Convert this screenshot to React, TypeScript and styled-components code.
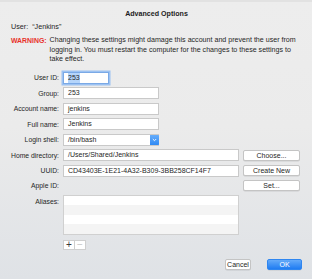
import styled, { createGlobalStyle } from "styled-components";

const GlobalStyle = createGlobalStyle`
	html, body {
		margin: 0;
		padding: 0;
	}
	body {
		font-family: "Liberation Sans", Arial, sans-serif;
		-webkit-font-smoothing: antialiased;
	}
`;

const Sheet = styled.div`
	box-sizing: border-box;
	width: 312px;
	height: 279px;
	overflow: hidden;
	display: flex;
	flex-direction: column;
	padding: 8px 10px 0 11px;
	background: linear-gradient(#ededed 0%, #ebebeb 45%, #dfe2e6 100%);
	border-top: 2px solid #e2e2e2;
	color: #262626;
	font-size: 7.2px;
`;

const Title = styled.h1`
	margin: 0;
	font-size: 7.1px;
	font-weight: 700;
	text-align: center;
	line-height: 9px;
	color: #1c1c1c;
`;

const UserLine = styled.div`
	margin-top: 3px;
	line-height: 9px;
	word-spacing: 2px;
`;

const Warning = styled.div`
	display: flex;
	gap: 3px;
	margin-top: 5px;
	line-height: 9.5px;
`;

const WarningTag = styled.span`
	color: #e8312a;
	font-weight: 700;
	font-size: 6.9px;
	flex: none;
`;

const WarningText = styled.p`
	margin: 0;
	font-size: 7.1px;
	white-space: nowrap;
`;

const Form = styled.div`
	display: grid;
	grid-template-columns: 48px 176px 57px;
	column-gap: 4px;
	row-gap: 3.5px;
	margin-top: 7px;
	align-items: center;
`;

const Label = styled.label<{ $top?: boolean }>`
	font-size: 6.8px;
	text-align: right;
	white-space: nowrap;
	justify-self: end;
	align-self: ${({ $top }) => ($top ? "start" : "center")};
	padding-top: ${({ $top }) => ($top ? "2px" : "0")};
	line-height: 9px;
`;

const Field = styled.div<{ $w?: number; $focus?: boolean }>`
	box-sizing: border-box;
	width: ${({ $w }) => ($w ? `${$w}px` : "100%")};
	height: 12px;
	background: #fff;
	border: 1px solid ${({ $focus }) => ($focus ? "#7aa9e6" : "#c9c9c9")};
	box-shadow: ${({ $focus }) => ($focus ? "0 0 0 1.5px #9cc2f2" : "none")};
	padding: 0 4px;
	display: flex;
	align-items: center;
	font-size: 7px;
	line-height: 10px;
	grid-column: 2;
	white-space: nowrap;
	overflow: hidden;
`;

const Selected = styled.span`
	background: #b5d5fb;
`;

const Popup = styled(Field)`
	padding-right: 0;
	justify-content: space-between;
	border-right: none;
`;

const PopupArrow = styled.span`
	width: 9px;
	height: 12px;
	margin-top: -1px;
	margin-bottom: -1px;
	border-radius: 0 2px 2px 0;
	background: linear-gradient(#6bb0fb, #2a86f4);
	display: flex;
	align-items: center;
	justify-content: center;
`;

const Button = styled.button<{ $primary?: boolean }>`
	box-sizing: border-box;
	height: 11px;
	padding: 0;
	font-family: inherit;
	font-size: 7px;
	line-height: 9px;
	border-radius: 2px;
	border: 1px solid ${({ $primary }) => ($primary ? "#2f86f0" : "#c4c4c4")};
	background: ${({ $primary }) =>
		$primary ? "linear-gradient(#64aaf9, #1f7cf2)" : "#fff"};
	color: ${({ $primary }) => ($primary ? "#fff" : "#262626")};
	box-shadow: 0 0.5px 0.5px rgba(0, 0, 0, 0.12);
`;

const SideButton = styled(Button)`
	width: 57px;
	grid-column: 3;
`;

const AliasList = styled.div`
	grid-column: 2;
	box-sizing: border-box;
	height: 40px;
	border: 1px solid #d0d0d0;
	display: flex;
	flex-direction: column;
`;

const AliasRow = styled.div<{ $odd?: boolean }>`
	flex: 1;
	background: ${({ $odd }) => ($odd ? "#f4f4f4" : "#fff")};
`;

const ListControls = styled.div`
	display: flex;
	margin: 5px 0 0 52px;
`;

const ControlButton = styled.div<{ $disabled?: boolean }>`
	box-sizing: border-box;
	width: 12px;
	height: 10px;
	background: #fff;
	border: 1px solid #cfcfcf;
	margin-right: -1px;
	display: flex;
	align-items: center;
	justify-content: center;
	color: ${({ $disabled }) => ($disabled ? "#c4c4c4" : "#3a3a3a")};
	font-size: 10px;
	line-height: 10px;
`;

const Footer = styled.div`
	display: flex;
	justify-content: flex-end;
	gap: 16px;
	margin-top: 9px;
`;

const FooterButton = styled(Button)<{ $w: number }>`
	width: ${({ $w }) => $w}px;
	height: 11px;
`;

const Empty = styled.div`
	grid-column: 2;
`;

const aliasRows = [false, true, false, true];

export default function App() {
	return (
		<>
			<GlobalStyle />
			<Sheet>
				<Title>Advanced Options</Title>
				<UserLine>User: &ldquo;Jenkins&rdquo;</UserLine>
				<Warning>
					<WarningTag>WARNING:</WarningTag>
					<WarningText>
						Changing these settings might damage this account and prevent the user from
						<br />
						logging in. You must restart the computer for the changes to these settings to
						<br />
						take effect.
					</WarningText>
				</Warning>

				<Form>
					<Label>User ID:</Label>
					<Field $w={46} $focus>
						<Selected>253</Selected>
					</Field>
					<span />

					<Label>Group:</Label>
					<Field $w={96}>253</Field>
					<span />

					<Label>Account name:</Label>
					<Field $w={96}>jenkins</Field>
					<span />

					<Label>Full name:</Label>
					<Field $w={96}>Jenkins</Field>
					<span />

					<Label>Login shell:</Label>
					<Popup $w={96}>
						/bin/bash
						<PopupArrow>
							<svg width="5" height="4" viewBox="0 0 5 4">
								<path d="M0.8 1 L2.5 2.7 L4.2 1" fill="none" stroke="#fff" strokeWidth="0.9" />
							</svg>
						</PopupArrow>
					</Popup>
					<span />

					<Label>Home directory:</Label>
					<Field>/Users/Shared/Jenkins</Field>
					<SideButton>Choose...</SideButton>

					<Label>UUID:</Label>
					<Field>CD43403E-1E21-4A32-B309-3BB258CF14F7</Field>
					<SideButton>Create New</SideButton>

					<Label>Apple ID:</Label>
					<Empty />
					<SideButton>Set...</SideButton>

					<Label $top>Aliases:</Label>
					<AliasList>
						{aliasRows.map((odd, i) => (
							<AliasRow key={i} $odd={odd} />
						))}
					</AliasList>
					<span />
				</Form>

				<ListControls>
					<ControlButton>+</ControlButton>
					<ControlButton $disabled>&minus;</ControlButton>
				</ListControls>

				<Footer>
					<FooterButton $w={26}>Cancel</FooterButton>
					<FooterButton $w={35} $primary>
						OK
					</FooterButton>
				</Footer>
			</Sheet>
		</>
	);
}
